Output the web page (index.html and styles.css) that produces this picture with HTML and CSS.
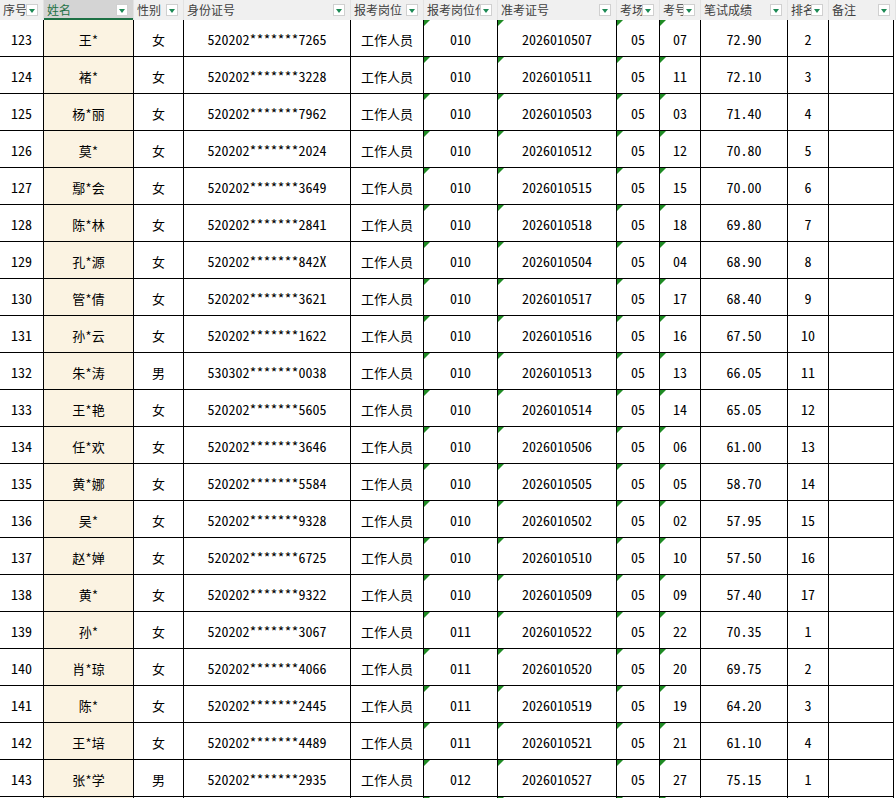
FILE: index.html
```html
<!DOCTYPE html>
<html lang="zh-CN">
<head>
<meta charset="utf-8">
<title>成绩表</title>
<link rel="stylesheet" href="styles.css">
</head>
<body>
<div class="sheet">
  <div class="row head">
    <div class="h"><span class="lbl">序号</span><span class="fb"></span></div>
    <div class="h sel"><span class="lbl">姓名</span><span class="fb"></span></div>
    <div class="h"><span class="lbl">性别</span><span class="fb"></span></div>
    <div class="h"><span class="lbl">身份证号</span><span class="fb"></span></div>
    <div class="h"><span class="lbl">报考岗位</span><span class="fb"></span></div>
    <div class="h"><span class="lbl">报考岗位代码</span><span class="fb"></span></div>
    <div class="h"><span class="lbl">准考证号</span><span class="fb"></span></div>
    <div class="h"><span class="lbl">考场</span><span class="fb"></span></div>
    <div class="h"><span class="lbl">考号</span><span class="fb"></span></div>
    <div class="h"><span class="lbl">笔试成绩</span><span class="fb"></span></div>
    <div class="h"><span class="lbl">排名</span><span class="fb"></span></div>
    <div class="h"><span class="lbl">备注</span><span class="fb"></span></div>
  </div>

  <div class="row"><div class="d n">123</div><div class="d c nm">王*</div><div class="d c">女</div><div class="d n">520202*******7265</div><div class="d c">工作人员</div><div class="d n t">010</div><div class="d n t">2026010507</div><div class="d n t">05</div><div class="d n t">07</div><div class="d n">72.90</div><div class="d n">2</div><div class="d"></div></div>
  <div class="row"><div class="d n">124</div><div class="d c nm">褚*</div><div class="d c">女</div><div class="d n">520202*******3228</div><div class="d c">工作人员</div><div class="d n t">010</div><div class="d n t">2026010511</div><div class="d n t">05</div><div class="d n t">11</div><div class="d n">72.10</div><div class="d n">3</div><div class="d"></div></div>
  <div class="row"><div class="d n">125</div><div class="d c nm">杨*丽</div><div class="d c">女</div><div class="d n">520202*******7962</div><div class="d c">工作人员</div><div class="d n t">010</div><div class="d n t">2026010503</div><div class="d n t">05</div><div class="d n t">03</div><div class="d n">71.40</div><div class="d n">4</div><div class="d"></div></div>
  <div class="row"><div class="d n">126</div><div class="d c nm">莫*</div><div class="d c">女</div><div class="d n">520202*******2024</div><div class="d c">工作人员</div><div class="d n t">010</div><div class="d n t">2026010512</div><div class="d n t">05</div><div class="d n t">12</div><div class="d n">70.80</div><div class="d n">5</div><div class="d"></div></div>
  <div class="row"><div class="d n">127</div><div class="d c nm">鄢*会</div><div class="d c">女</div><div class="d n">520202*******3649</div><div class="d c">工作人员</div><div class="d n t">010</div><div class="d n t">2026010515</div><div class="d n t">05</div><div class="d n t">15</div><div class="d n">70.00</div><div class="d n">6</div><div class="d"></div></div>
  <div class="row"><div class="d n">128</div><div class="d c nm">陈*林</div><div class="d c">女</div><div class="d n">520202*******2841</div><div class="d c">工作人员</div><div class="d n t">010</div><div class="d n t">2026010518</div><div class="d n t">05</div><div class="d n t">18</div><div class="d n">69.80</div><div class="d n">7</div><div class="d"></div></div>
  <div class="row"><div class="d n">129</div><div class="d c nm">孔*源</div><div class="d c">女</div><div class="d n">520202*******842X</div><div class="d c">工作人员</div><div class="d n t">010</div><div class="d n t">2026010504</div><div class="d n t">05</div><div class="d n t">04</div><div class="d n">68.90</div><div class="d n">8</div><div class="d"></div></div>
  <div class="row"><div class="d n">130</div><div class="d c nm">管*倩</div><div class="d c">女</div><div class="d n">520202*******3621</div><div class="d c">工作人员</div><div class="d n t">010</div><div class="d n t">2026010517</div><div class="d n t">05</div><div class="d n t">17</div><div class="d n">68.40</div><div class="d n">9</div><div class="d"></div></div>
  <div class="row"><div class="d n">131</div><div class="d c nm">孙*云</div><div class="d c">女</div><div class="d n">520202*******1622</div><div class="d c">工作人员</div><div class="d n t">010</div><div class="d n t">2026010516</div><div class="d n t">05</div><div class="d n t">16</div><div class="d n">67.50</div><div class="d n">10</div><div class="d"></div></div>
  <div class="row"><div class="d n">132</div><div class="d c nm">朱*涛</div><div class="d c">男</div><div class="d n">530302*******0038</div><div class="d c">工作人员</div><div class="d n t">010</div><div class="d n t">2026010513</div><div class="d n t">05</div><div class="d n t">13</div><div class="d n">66.05</div><div class="d n">11</div><div class="d"></div></div>
  <div class="row"><div class="d n">133</div><div class="d c nm">王*艳</div><div class="d c">女</div><div class="d n">520202*******5605</div><div class="d c">工作人员</div><div class="d n t">010</div><div class="d n t">2026010514</div><div class="d n t">05</div><div class="d n t">14</div><div class="d n">65.05</div><div class="d n">12</div><div class="d"></div></div>
  <div class="row"><div class="d n">134</div><div class="d c nm">任*欢</div><div class="d c">女</div><div class="d n">520202*******3646</div><div class="d c">工作人员</div><div class="d n t">010</div><div class="d n t">2026010506</div><div class="d n t">05</div><div class="d n t">06</div><div class="d n">61.00</div><div class="d n">13</div><div class="d"></div></div>
  <div class="row"><div class="d n">135</div><div class="d c nm">黄*娜</div><div class="d c">女</div><div class="d n">520202*******5584</div><div class="d c">工作人员</div><div class="d n t">010</div><div class="d n t">2026010505</div><div class="d n t">05</div><div class="d n t">05</div><div class="d n">58.70</div><div class="d n">14</div><div class="d"></div></div>
  <div class="row"><div class="d n">136</div><div class="d c nm">吴*</div><div class="d c">女</div><div class="d n">520202*******9328</div><div class="d c">工作人员</div><div class="d n t">010</div><div class="d n t">2026010502</div><div class="d n t">05</div><div class="d n t">02</div><div class="d n">57.95</div><div class="d n">15</div><div class="d"></div></div>
  <div class="row"><div class="d n">137</div><div class="d c nm">赵*婵</div><div class="d c">女</div><div class="d n">520202*******6725</div><div class="d c">工作人员</div><div class="d n t">010</div><div class="d n t">2026010510</div><div class="d n t">05</div><div class="d n t">10</div><div class="d n">57.50</div><div class="d n">16</div><div class="d"></div></div>
  <div class="row"><div class="d n">138</div><div class="d c nm">黄*</div><div class="d c">女</div><div class="d n">520202*******9322</div><div class="d c">工作人员</div><div class="d n t">010</div><div class="d n t">2026010509</div><div class="d n t">05</div><div class="d n t">09</div><div class="d n">57.40</div><div class="d n">17</div><div class="d"></div></div>
  <div class="row"><div class="d n">139</div><div class="d c nm">孙*</div><div class="d c">女</div><div class="d n">520202*******3067</div><div class="d c">工作人员</div><div class="d n t">011</div><div class="d n t">2026010522</div><div class="d n t">05</div><div class="d n t">22</div><div class="d n">70.35</div><div class="d n">1</div><div class="d"></div></div>
  <div class="row"><div class="d n">140</div><div class="d c nm">肖*琼</div><div class="d c">女</div><div class="d n">520202*******4066</div><div class="d c">工作人员</div><div class="d n t">011</div><div class="d n t">2026010520</div><div class="d n t">05</div><div class="d n t">20</div><div class="d n">69.75</div><div class="d n">2</div><div class="d"></div></div>
  <div class="row"><div class="d n">141</div><div class="d c nm">陈*</div><div class="d c">女</div><div class="d n">520202*******2445</div><div class="d c">工作人员</div><div class="d n t">011</div><div class="d n t">2026010519</div><div class="d n t">05</div><div class="d n t">19</div><div class="d n">64.20</div><div class="d n">3</div><div class="d"></div></div>
  <div class="row"><div class="d n">142</div><div class="d c nm">王*培</div><div class="d c">女</div><div class="d n">520202*******4489</div><div class="d c">工作人员</div><div class="d n t">011</div><div class="d n t">2026010521</div><div class="d n t">05</div><div class="d n t">21</div><div class="d n">61.10</div><div class="d n">4</div><div class="d"></div></div>
  <div class="row"><div class="d n">143</div><div class="d c nm">张*学</div><div class="d c">男</div><div class="d n">520202*******2935</div><div class="d c">工作人员</div><div class="d n t">012</div><div class="d n t">2026010527</div><div class="d n t">05</div><div class="d n t">27</div><div class="d n">75.15</div><div class="d n">1</div><div class="d"></div></div>
  <div class="row"><div class="d"></div><div class="d nm"></div><div class="d"></div><div class="d"></div><div class="d"></div><div class="d t"></div><div class="d t"></div><div class="d t"></div><div class="d t"></div><div class="d"></div><div class="d"></div><div class="d"></div></div>
</div>
</body>
</html>
```

FILE: styles.css
```css
html, body {
  margin: 0;
  padding: 0;
  background: #ffffff;
  overflow: hidden;
}

.sheet {
  width: 896px;
  height: 798px;
  overflow: hidden;
}

.row {
  display: grid;
  grid-template-columns: 44px 90px 50px 167px 73px 74px 119px 43px 41px 87px 41px 65px;
  height: 37px;
}

.row.head {
  height: 20px;
  background: #f0f0f0;
  width: 896px;
  grid-template-columns: 44px 90px 50px 167px 73px 74px 119px 43px 41px 87px 41px 67px;
}

.h {
  position: relative;
  box-sizing: border-box;
  height: 20px;
  padding: 0 0 0 3px;
  border-right: 1px solid #e2e2e2;
  font-family: "Noto Sans CJK SC", sans-serif;
  font-size: 12px;
  line-height: 20px;
  color: #404040;
  white-space: nowrap;
  overflow: hidden;
}

.lbl {
  display: block;
  overflow: hidden;
  margin-right: 17px;
}

.h.sel {
  background: #d4d4d4;
  color: #1e7145;
  box-shadow: inset 0 -2px 0 #1e7145;
}

.fb {
  position: absolute;
  top: 4px;
  right: 5px;
  width: 12px;
  height: 12px;
  box-sizing: border-box;
  background: #ffffff;
  border: 1px solid #d0d0d0;
  display: flex;
  align-items: center;
  justify-content: center;
}

.fb::after {
  content: "";
  width: 0;
  height: 0;
  border-left: 3px solid transparent;
  border-right: 3px solid transparent;
  border-top: 4px solid #1d8a55;
  margin-top: 1px;
}

.d {
  position: relative;
  box-sizing: border-box;
  height: 37px;
  border-right: 1px solid #000000;
  border-bottom: 1px solid #000000;
  display: flex;
  align-items: center;
  justify-content: center;
  padding-top: 2px;
  color: #000000;
  white-space: nowrap;
  overflow: hidden;
}

.d.n {
  font-family: "Noto Sans Mono CJK SC", "DejaVu Sans Mono", monospace;
  font-size: 14px;
}

.d.c {
  font-family: "Noto Sans Mono CJK SC", "Noto Sans CJK SC", sans-serif;
  font-size: 13px;
}

.d.nm {
  background: #fbf3e2;
}

.d.t::before {
  content: "";
  position: absolute;
  top: 0;
  left: 0;
  width: 0;
  height: 0;
  border-top: 6px solid #1f8b24;
  border-right: 6px solid transparent;
}
```
